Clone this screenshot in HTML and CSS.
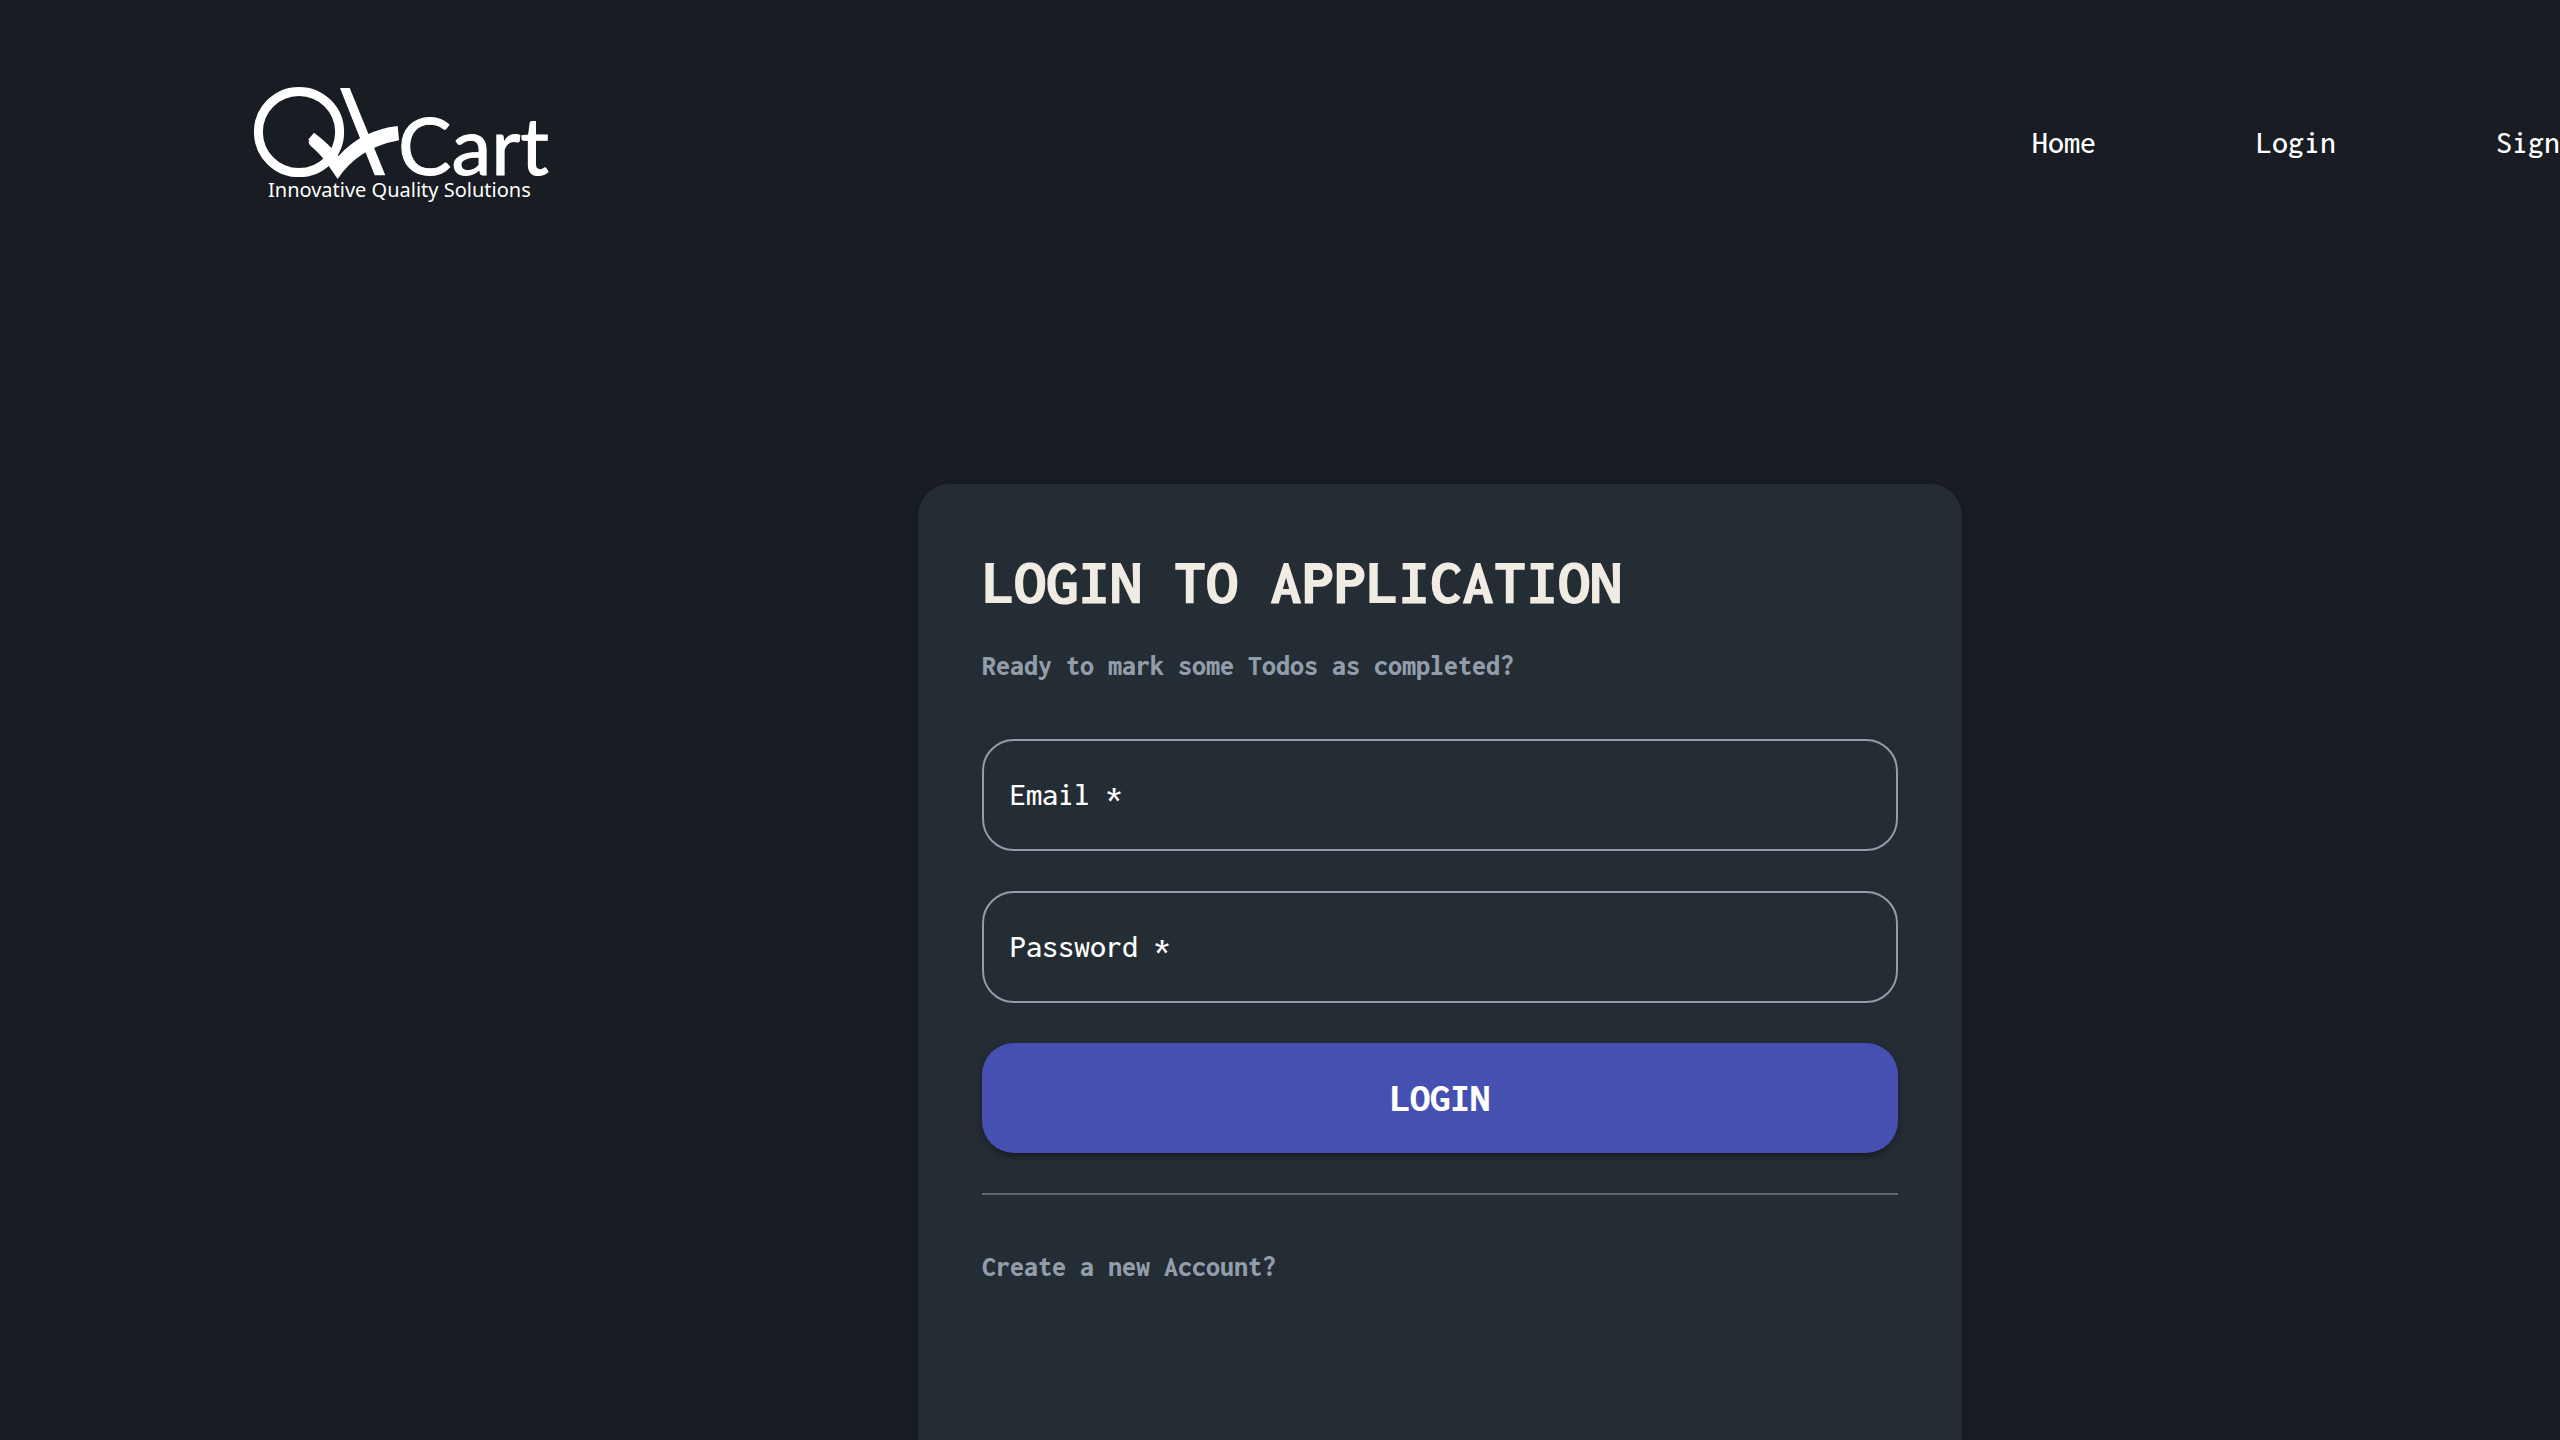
FILE: index.html
```html
<!DOCTYPE html>
<html lang="en">
<head>
<meta charset="utf-8">
<title>QKart Login</title>
<link rel="stylesheet" href="styles.css">
</head>
<body>
<div class="page">
  <header class="header">
    <a class="brand" href="#">
      <svg class="logo" viewBox="0 0 300 114" role="img" aria-label="QA Cart">
        <circle cx="45" cy="46" r="40.6" fill="none" stroke="#fff" stroke-width="9"/>
        <path fill="#fff" d="M86 2H95.7L131.3 89.3H120.7Z"/>
        <path fill="#fff" d="M60 46.7L54.3 53.5L55.5 55L54.3 56L56 59.3Q66 68 72 76L83.7 93Q104 62 145 54.3L143.7 40Q108 44 84.5 70Q74 57 60 46.7Z"/>
        <text class="logo-name" x="144" y="89">Cart</text>
        <text class="logo-tagline" x="14" y="111">Innovative Quality Solutions</text>
      </svg>
    </a>
    <nav class="nav">
      <a href="#">Home</a>
      <a href="#">Login</a>
      <a href="#">Signup</a>
    </nav>
  </header>
  <main class="card">
    <h1 class="title">LOGIN TO APPLICATION</h1>
    <p class="note">Ready to mark some Todos as completed?</p>
    <form class="form">
      <div class="field">
        <label for="email">Email *</label>
        <input id="email" type="email" required>
      </div>
      <div class="field">
        <label for="password">Password *</label>
        <input id="password" type="password" required>
      </div>
      <button class="submit" type="submit">LOGIN</button>
    </form>
    <hr class="divider">
    <a class="note" href="#">Create a new Account?</a>
  </main>
</div>
</body>
</html>
```
FILE: styles.css
```css
* { box-sizing: border-box; }

body {
  margin: 0;
  min-height: 100vh;
  overflow: hidden;
  background: #181c23;
  color: #fff;
  font-family: Inconsolata, "Noto Sans Mono CJK SC", "Liberation Mono", monospace;
  font-size: 32px;
  font-weight: 500;
  line-height: 40px;
}

a { color: inherit; text-decoration: none; }

.page { width: 112.5vw; }

.header {
  display: flex;
  justify-content: space-between;
  align-items: center;
  padding: 86px 288px 0 254px;
}

.brand { display: block; }
.logo { display: block; width: 300px; height: 114px; overflow: visible; }
.logo-name { font: 80px Lato, sans-serif; fill: #fff; stroke: #fff; stroke-width: 1px; }
.logo-tagline { font: 20px "Noto Sans", sans-serif; fill: #fff; }

.nav { display: flex; gap: 160px; }

.card {
  width: 1044px;
  min-height: 1200px;
  margin: 284px auto 0;
  padding: 62px 64px 64px;
  border-radius: 32px;
  background: #242c34;
  box-shadow: 0 4px 2px -2px rgba(0, 0, 0, .2), 0 2px 2px rgba(0, 0, 0, .14), 0 2px 6px rgba(0, 0, 0, .12);
}

.title {
  margin: 0 0 32px;
  color: #f0ece3;
  font-size: 64px;
  font-weight: 800;
  line-height: 72px;
}

.note {
  display: block;
  margin: 0;
  color: #929daa;
  font-size: 28px;
  font-weight: 800;
  line-height: 32px;
}

.form {
  display: grid;
  gap: 40px;
  margin-top: 57px;
}

.field {
  display: flex;
  align-items: center;
  height: 112px;
  padding: 0 26px;
  border: 2px solid #929daa;
  border-radius: 32px;
}

.field input {
  flex: 1;
  min-width: 0;
  border: 0;
  outline: 0;
  background: none;
  color: inherit;
  font: inherit;
}

.submit {
  height: 110px;
  border: 0;
  border-radius: 32px;
  background: #4550b0;
  color: #fff;
  font: inherit;
  font-size: 40px;
  font-weight: 800;
  box-shadow: 0 6px 2px -4px rgba(0, 0, 0, .2), 0 4px 4px rgba(0, 0, 0, .14), 0 2px 10px rgba(0, 0, 0, .12);
}

.divider {
  height: 2px;
  margin: 40px 0 56px;
  border: 0;
  background: #5d6571;
}
```
